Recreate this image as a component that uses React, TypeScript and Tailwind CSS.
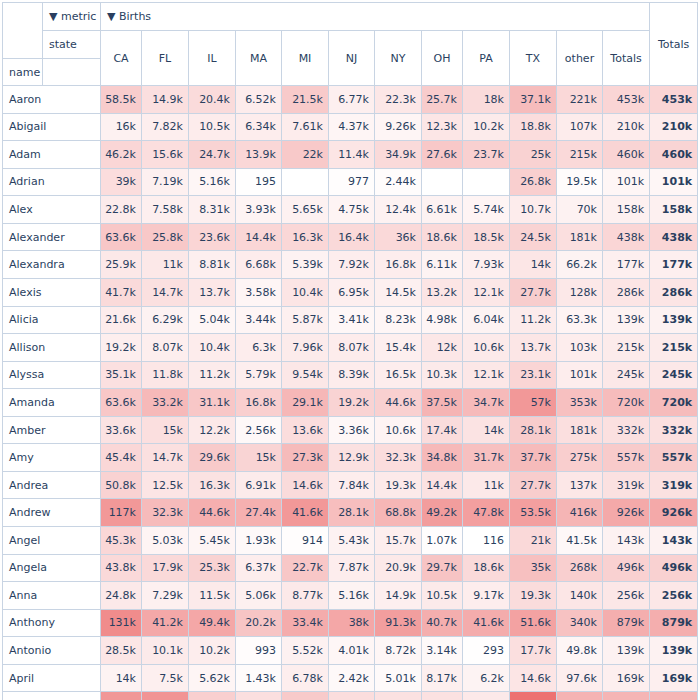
import React from "react";

const STATES = ["CA", "FL", "IL", "MA", "MI", "NJ", "NY", "OH", "PA", "TX", "other", "Totals"];

// per-column top of the heat scale (the real columns run past the visible names)
const SCALE = [285000, 118000, 140000, 87000, 101000, 108000, 235000, 125000, 125000, 139000, 1400000, 2700000, 2700000];

const ROWS: [string, string[]][] = [
  ["Aaron", ["58.5k", "14.9k", "20.4k", "6.52k", "21.5k", "6.77k", "22.3k", "25.7k", "18k", "37.1k", "221k", "453k", "453k"]],
  ["Abigail", ["16k", "7.82k", "10.5k", "6.34k", "7.61k", "4.37k", "9.26k", "12.3k", "10.2k", "18.8k", "107k", "210k", "210k"]],
  ["Adam", ["46.2k", "15.6k", "24.7k", "13.9k", "22k", "11.4k", "34.9k", "27.6k", "23.7k", "25k", "215k", "460k", "460k"]],
  ["Adrian", ["39k", "7.19k", "5.16k", "195", "", "977", "2.44k", "", "", "26.8k", "19.5k", "101k", "101k"]],
  ["Alex", ["22.8k", "7.58k", "8.31k", "3.93k", "5.65k", "4.75k", "12.4k", "6.61k", "5.74k", "10.7k", "70k", "158k", "158k"]],
  ["Alexander", ["63.6k", "25.8k", "23.6k", "14.4k", "16.3k", "16.4k", "36k", "18.6k", "18.5k", "24.5k", "181k", "438k", "438k"]],
  ["Alexandra", ["25.9k", "11k", "8.81k", "6.68k", "5.39k", "7.92k", "16.8k", "6.11k", "7.93k", "14k", "66.2k", "177k", "177k"]],
  ["Alexis", ["41.7k", "14.7k", "13.7k", "3.58k", "10.4k", "6.95k", "14.5k", "13.2k", "12.1k", "27.7k", "128k", "286k", "286k"]],
  ["Alicia", ["21.6k", "6.29k", "5.04k", "3.44k", "5.87k", "3.41k", "8.23k", "4.98k", "6.04k", "11.2k", "63.3k", "139k", "139k"]],
  ["Allison", ["19.2k", "8.07k", "10.4k", "6.3k", "7.96k", "8.07k", "15.4k", "12k", "10.6k", "13.7k", "103k", "215k", "215k"]],
  ["Alyssa", ["35.1k", "11.8k", "11.2k", "5.79k", "9.54k", "8.39k", "16.5k", "10.3k", "12.1k", "23.1k", "101k", "245k", "245k"]],
  ["Amanda", ["63.6k", "33.2k", "31.1k", "16.8k", "29.1k", "19.2k", "44.6k", "37.5k", "34.7k", "57k", "353k", "720k", "720k"]],
  ["Amber", ["33.6k", "15k", "12.2k", "2.56k", "13.6k", "3.36k", "10.6k", "17.4k", "14k", "28.1k", "181k", "332k", "332k"]],
  ["Amy", ["45.4k", "14.7k", "29.6k", "15k", "27.3k", "12.9k", "32.3k", "34.8k", "31.7k", "37.7k", "275k", "557k", "557k"]],
  ["Andrea", ["50.8k", "12.5k", "16.3k", "6.91k", "14.6k", "7.84k", "19.3k", "14.4k", "11k", "27.7k", "137k", "319k", "319k"]],
  ["Andrew", ["117k", "32.3k", "44.6k", "27.4k", "41.6k", "28.1k", "68.8k", "49.2k", "47.8k", "53.5k", "416k", "926k", "926k"]],
  ["Angel", ["45.3k", "5.03k", "5.45k", "1.93k", "914", "5.43k", "15.7k", "1.07k", "116", "21k", "41.5k", "143k", "143k"]],
  ["Angela", ["43.8k", "17.9k", "25.3k", "6.37k", "22.7k", "7.87k", "20.9k", "29.7k", "18.6k", "35k", "268k", "496k", "496k"]],
  ["Anna", ["24.8k", "7.29k", "11.5k", "5.06k", "8.77k", "5.16k", "14.9k", "10.5k", "9.17k", "19.3k", "140k", "256k", "256k"]],
  ["Anthony", ["131k", "41.2k", "49.4k", "20.2k", "33.4k", "38k", "91.3k", "40.7k", "41.6k", "51.6k", "340k", "879k", "879k"]],
  ["Antonio", ["28.5k", "10.1k", "10.2k", "993", "5.52k", "4.01k", "8.72k", "3.14k", "293", "17.7k", "49.8k", "139k", "139k"]],
  ["April", ["14k", "7.5k", "5.62k", "1.43k", "6.78k", "2.42k", "5.01k", "8.17k", "6.2k", "14.6k", "97.6k", "169k", "169k"]],
];

// next row only peeks in at the bottom edge: colours, no readable text
const PEEK = [118000, 50300, 27100, 11200, 21400, 14600, 27900, 15200, 10800, 78400, 428000, 803000, 803000];

function parse(v: string) {
  if (!v) return null;
  return v.endsWith("k") ? parseFloat(v) * 1000 : parseFloat(v);
}

function heatOf(n: number | null, col: number): React.CSSProperties | undefined {
  if (n === null) return undefined;
  const t = Math.min(1, n / SCALE[col]);
  const d = Math.round(250 * t);
  const r = 255 - Math.round(d * 0.13);
  return { backgroundColor: `rgb(${r},${255 - d},${255 - d})` };
}

const line = "border border-[#c8d4e3]";

export default function App() {
  return (
    <div className="h-[700px] overflow-hidden bg-white pl-[2px] pt-[2px]">
      <table
        className="w-[695px] table-fixed border-collapse text-[11px] leading-none text-[#2a3f5f]"
        style={{ fontFamily: '"DejaVu Sans", Verdana, sans-serif' }}
      >
        <colgroup>
          <col className="w-[40px]" />
          <col className="w-[58px]" />
          <col className="w-[41px]" />
          <col className="w-[47px]" />
          <col className="w-[47px]" />
          <col className="w-[46px]" />
          <col className="w-[47px]" />
          <col className="w-[46px]" />
          <col className="w-[47px]" />
          <col className="w-[41px]" />
          <col className="w-[47px]" />
          <col className="w-[47px]" />
          <col className="w-[46px]" />
          <col className="w-[47px]" />
          <col className="w-[48px]" />
        </colgroup>
        <thead>
          <tr className="h-[28px]">
            <th className={`${line} font-normal`} rowSpan={2} />
            <th className={`${line} whitespace-nowrap pl-[6px] text-left font-normal`}>▼ metric</th>
            <th className={`${line} whitespace-nowrap pl-[6px] text-left font-normal`} colSpan={12}>
              ▼ Births
            </th>
            <th className={`${line} text-center font-normal`} rowSpan={3}>
              Totals
            </th>
          </tr>
          <tr className="h-[28px]">
            <th className={`${line} pl-[6px] text-left font-normal`}>state</th>
            {STATES.map((s) => (
              <th key={s} className={`${line} text-center font-normal`} rowSpan={2}>
                {s}
              </th>
            ))}
          </tr>
          <tr className="h-[27px]">
            <th className={`${line} pl-[6px] text-left font-normal`}>name</th>
            <th className={`${line} font-normal`} />
          </tr>
        </thead>
        <tbody>
          {ROWS.map(([name, vals]) => (
            <tr key={name} className="h-[27.57px]">
              <th className={`${line} pl-[6px] text-left font-normal`} colSpan={2}>
                {name}
              </th>
              {vals.map((v, i) => (
                <td
                  key={i}
                  className={`${line} whitespace-nowrap pr-[5px] text-right ${i === 12 ? "font-bold" : "font-normal"}`}
                  style={heatOf(parse(v), i)}
                >
                  {v}
                </td>
              ))}
            </tr>
          ))}
          <tr className="h-[27.57px]">
            <th className={line} colSpan={2} />
            {PEEK.map((n, i) => (
              <td key={i} className={line} style={heatOf(n, i)} />
            ))}
          </tr>
        </tbody>
      </table>
    </div>
  );
}
